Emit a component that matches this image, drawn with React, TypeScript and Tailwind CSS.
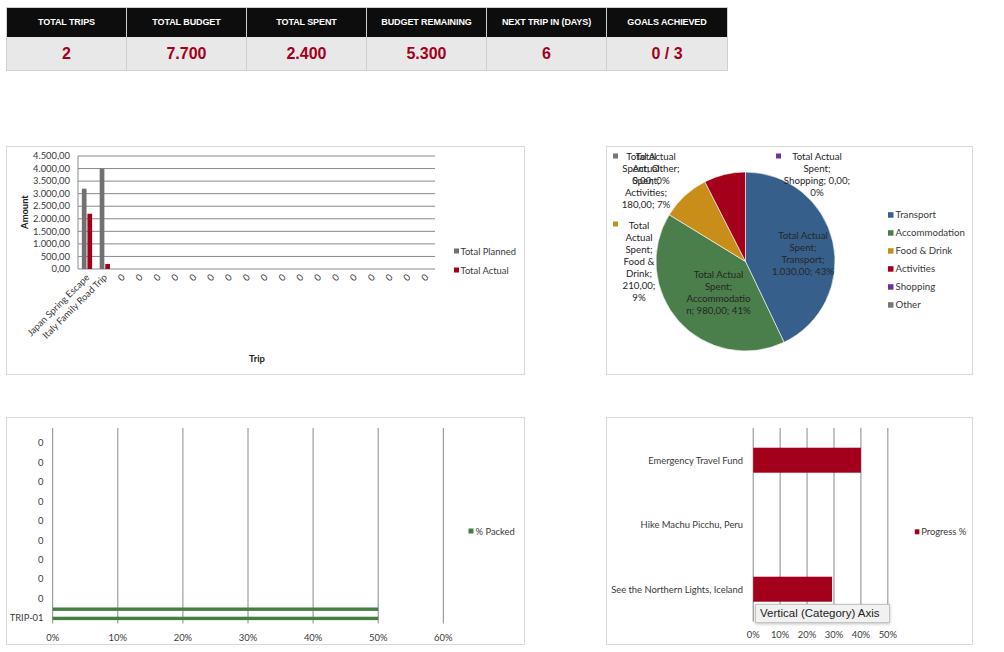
import React from 'react';

const FONT = "Lato, 'Open Sans', sans-serif";
const TEXT = '#3a3a3a';
const GRID = '#8a8a8a';
const RED = '#a3001b';
const FS = 9.4;

const STATS = [
  { label: 'Total Trips', value: '2' },
  { label: 'Total Budget', value: '7.700' },
  { label: 'Total Spent', value: '2.400' },
  { label: 'Budget Remaining', value: '5.300' },
  { label: 'Next Trip In (Days)', value: '6' },
  { label: 'Goals Achieved', value: '0 / 3' },
];

function StatTable() {
  return (
    <div className="w-[722px] border border-[#d0d0d0] font-['Liberation_Sans',Arial,sans-serif]">
      <div className="grid grid-cols-6">
        {STATS.map((s, i) => (
          <div
            key={s.label}
            className={`h-[29px] bg-[#0d0d0d] flex items-center justify-center text-[9px] font-bold uppercase text-white tracking-[-0.1px] ${
              i < 5 ? 'border-r border-[#cfcfcf]' : ''
            }`}
          >
            {s.label}
          </div>
        ))}
      </div>
      <div className="grid grid-cols-6">
        {STATS.map((s, i) => (
          <div
            key={s.label}
            className={`h-[33px] bg-[#e8e8e8] flex items-center justify-center text-[16px] font-bold text-[#a3001b] ${
              i < 5 ? 'border-r border-[#cfcfcf]' : ''
            }`}
          >
            {s.value}
          </div>
        ))}
      </div>
    </div>
  );
}

function Panel({ w, h, children }: { w: number; h: number; children: React.ReactNode }) {
  return (
    <div className="relative border border-[#d9d9d9] bg-white" style={{ width: w, height: h }}>
      {children}
    </div>
  );
}

// ---- Trip budget column chart ----
const TRIPS = ['Japan Spring Escape', 'Italy Family Road Trip', ...Array(18).fill('0')];

function TripBudgetChart() {
  const left = 78;
  const right = 435;
  const top = 156;
  const bottom = 269;
  const step = (bottom - top) / 9;
  const cat = (right - left) / 20;
  const y = (v: number) => bottom - (v / 4500) * (bottom - top);
  const ticks = ['4.500,00', '4.000,00', '3.500,00', '3.000,00', '2.500,00', '2.000,00', '1.500,00', '1.000,00', '500,00', '0,00'];
  const bars = [
    { planned: 3200, actual: 2200 },
    { planned: 4000, actual: 200 },
  ];
  return (
    <svg width={517} height={227} viewBox="7 147 517 227" fontFamily={FONT} fontSize={FS} fill={TEXT}>
      {ticks.map((t, i) => (
        <g key={t}>
          <line x1={left} x2={right} y1={top + step * i} y2={top + step * i} stroke={GRID} strokeWidth={1} />
          <text x={70} y={top + step * i + 3.2} textAnchor="end">
            {t}
          </text>
        </g>
      ))}
      <line x1={left} x2={left} y1={top} y2={bottom} stroke={GRID} strokeWidth={1} />
      {bars.map((b, i) => {
        const cx = left + cat * (i + 0.5);
        return (
          <g key={i}>
            <rect x={cx - 5.1} y={y(b.planned)} width={4.7} height={bottom - y(b.planned)} fill="#717171" />
            <rect x={cx + 0.5} y={y(b.actual)} width={4.7} height={bottom - y(b.actual)} fill={RED} />
          </g>
        );
      })}
      {TRIPS.map((t, i) => {
        const cx = left + cat * (i + 0.5);
        return (
          <text key={i} transform={`translate(${cx + 3} 278) rotate(-45)`} textAnchor="end">
            {t}
          </text>
        );
      })}
      <text transform="translate(28 212) rotate(-90)" textAnchor="middle" fontWeight={700} fill="#222">
        Amount
      </text>
      <text x={257} y={362} textAnchor="middle" fontWeight={700} fill="#222">
        Trip
      </text>
      <rect x={454} y={248.5} width={5} height={5} fill="#717171" />
      <text x={460.5} y={254.5}>Total Planned</text>
      <rect x={454} y={267.5} width={5} height={5} fill={RED} />
      <text x={460.5} y={273.5}>Total Actual</text>
    </svg>
  );
}

// ---- Spend by category pie ----
const SLICES = [
  { name: 'Transport', value: 1030, color: '#365f8b' },
  { name: 'Accommodation', value: 980, color: '#4a7e4a' },
  { name: 'Food & Drink', value: 210, color: '#c98e1a' },
  { name: 'Activities', value: 180, color: '#a5001b' },
  { name: 'Shopping', value: 0, color: '#7030a0' },
  { name: 'Other', value: 0, color: '#767676' },
];

function Lines({ x, y, lines }: { x: number; y: number; lines: string[] }) {
  return (
    <text textAnchor="middle" fill="#262626">
      {lines.map((l, i) => (
        <tspan key={i} x={x} y={y + i * 12}>
          {l}
        </tspan>
      ))}
    </text>
  );
}

function CategoryPie() {
  const cx = 745.5;
  const cy = 261.5;
  const r = 89.5;
  const total = SLICES.reduce((a, s) => a + s.value, 0);
  const pt = (f: number) => [cx + r * Math.sin(2 * Math.PI * f), cy - r * Math.cos(2 * Math.PI * f)];
  let acc = 0;
  const paths = SLICES.filter((s) => s.value > 0).map((s) => {
    const a0 = acc / total;
    acc += s.value;
    const a1 = acc / total;
    const [x0, y0] = pt(a0);
    const [x1, y1] = pt(a1);
    const large = a1 - a0 > 0.5 ? 1 : 0;
    return (
      <path
        key={s.name}
        d={`M${cx} ${cy} L${x0} ${y0} A${r} ${r} 0 ${large} 1 ${x1} ${y1} Z`}
        fill={s.color}
        stroke="#fff"
        strokeWidth={0.6}
      />
    );
  });
  return (
    <svg width={365} height={227} viewBox="607 147 365 227" fontFamily={FONT} fontSize={FS + 0.3}>
      {paths}
      <Lines x={803} y={238.5} lines={['Total Actual', 'Spent;', 'Transport;', '1.030,00; 43%']} />
      <Lines x={718.5} y={278.3} lines={['Total Actual', 'Spent;', 'Accommodatio', 'n; 980,00; 41%']} />
      <rect x={613} y={221.5} width={5} height={5} fill="#c98e1a" />
      <Lines x={639} y={228.8} lines={['Total', 'Actual', 'Spent;', 'Food &', 'Drink;', '210,00;', '9%']} />
      {/* Other and Activities labels collide, as in the source chart */}
      <rect x={613} y={153.5} width={5} height={5} fill="#767676" />
      <Lines x={651} y={160} lines={['Total Actual', 'Spent; Other;', '0,00; 0%']} />
      <Lines x={646} y={160} lines={['Total', 'Actual', 'Spent;', 'Activities;', '180,00; 7%']} />
      <rect x={776} y={153.5} width={5} height={5} fill="#7030a0" />
      <Lines x={817} y={160} lines={['Total Actual', 'Spent;', 'Shopping; 0,00;', '0%']} />
      {SLICES.map((s, i) => (
        <g key={s.name}>
          <rect x={888} y={212.2 + i * 18} width={5.5} height={5.5} fill={s.color} />
          <text x={895.5} y={218 + i * 18} fill={TEXT}>
            {s.name}
          </text>
        </g>
      ))}
    </svg>
  );
}

// ---- Packing progress bar chart ----
function PackingChart() {
  const left = 52.7;
  const col = 65.1;
  const top = 428;
  const bottom = 623.5;
  const labels = [...Array(9).fill('0'), 'TRIP-01'];
  return (
    <svg width={517} height={226} viewBox="7 418 517 226" fontFamily={FONT} fontSize={FS} fill={TEXT}>
      {[0, 1, 2, 3, 4, 5, 6].map((i) => (
        <g key={i}>
          <line x1={left + col * i} x2={left + col * i} y1={top} y2={bottom} stroke={GRID} strokeWidth={1} />
          <text x={left + col * i} y={640.5} textAnchor="middle">
            {i * 10}%
          </text>
        </g>
      ))}
      {labels.map((l, i) => (
        <text key={i} x={43.5} y={446.3 + 19.45 * i} textAnchor="end">
          {l}
        </text>
      ))}
      <rect x={left} y={607.5} width={col * 5} height={3.4} fill="#437f43" />
      <rect x={left} y={616.7} width={col * 5} height={3.4} fill="#437f43" />
      <rect x={468.5} y={528.5} width={5} height={5} fill="#437f43" />
      <text x={475.5} y={534.5}>% Packed</text>
    </svg>
  );
}

// ---- Goals progress bar chart ----
function GoalsChart() {
  const left = 753.2;
  const col = 26.93;
  const top = 428;
  const bottom = 621.5;
  const goals = [
    { name: 'Emergency Travel Fund', pct: 40, y: 460.2 },
    { name: 'Hike Machu Picchu, Peru', pct: 0, y: 525 },
    { name: 'See the Northern Lights, Iceland', pct: 29.3, y: 589.2 },
  ];
  return (
    <svg width={365} height={226} viewBox="607 418 365 226" fontFamily={FONT} fontSize={FS} fill={TEXT}>
      {[0, 1, 2, 3, 4, 5].map((i) => (
        <g key={i}>
          <line x1={left + col * i} x2={left + col * i} y1={top} y2={bottom} stroke={GRID} strokeWidth={1} />
          <text x={left + col * i} y={638} textAnchor="middle">
            {i * 10}%
          </text>
        </g>
      ))}
      {goals.map((g) => (
        <g key={g.name}>
          <text x={743} y={g.y + 3.3} textAnchor="end">
            {g.name}
          </text>
          {g.pct > 0 && <rect x={left} y={g.y - 12.5} width={(g.pct / 10) * col} height={25} fill={RED} />}
        </g>
      ))}
      <rect x={914.8} y={529.3} width={4.6} height={5} fill={RED} />
      <text x={921.2} y={535}>Progress %</text>
    </svg>
  );
}

export default function App() {
  return (
    <div className="w-[1004px] h-[652px] bg-white pl-[6px] pt-[7px] overflow-hidden">
      <StatTable />
      <div className="mt-[75px] flex gap-[81px]">
        <Panel w={519} h={229}>
          <TripBudgetChart />
        </Panel>
        <Panel w={367} h={229}>
          <CategoryPie />
        </Panel>
      </div>
      <div className="mt-[42px] flex gap-[81px]">
        <Panel w={519} h={228}>
          <PackingChart />
        </Panel>
        <Panel w={367} h={228}>
          <GoalsChart />
          {/* hover tooltip over the category axis */}
          <div className="absolute left-[148px] top-[186px] w-[135px] h-[19px] bg-[#f1f1f1] border border-[#c4c4c4] shadow-[0_1px_3px_rgba(0,0,0,0.25)] pl-[4px] flex items-center font-['Liberation_Sans',Arial,sans-serif] text-[11.5px] text-[#222] whitespace-nowrap">
            Vertical (Category) Axis
          </div>
        </Panel>
      </div>
    </div>
  );
}
